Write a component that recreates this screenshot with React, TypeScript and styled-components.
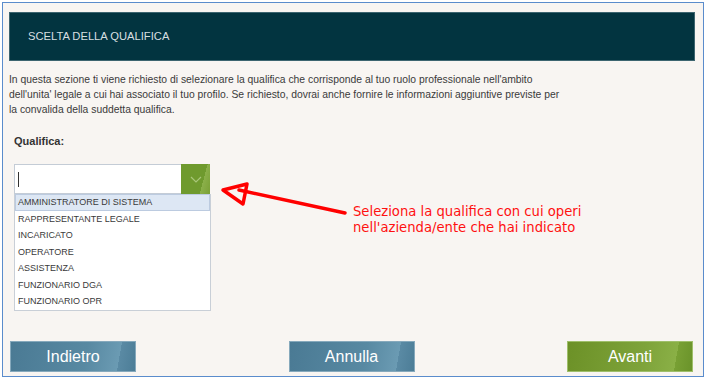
import React from "react";
import styled, { createGlobalStyle } from "styled-components";

const Global = createGlobalStyle`
  html, body { margin: 0; padding: 0; background: #ffffff; }
  body { font-family: "Liberation Sans", Arial, sans-serif; }
`;

const Frame = styled.div`
  position: relative;
  box-sizing: border-box;
  margin: 2px 0 0 2px;
  width: 702px;
  height: 375px;
  border: 1px solid #5a8ccc;
  background: #f8f5f2;
  padding: 9px 8px 4px 6px;
  display: flex;
  flex-direction: column;
`;

const Header = styled.div`
  box-sizing: border-box;
  height: 49px;
  background: #023440;
  border: 1px solid #3d6570;
  display: flex;
  align-items: center;
  padding: 0 0 2px 18px;
  color: #d6dfe0;
  font-size: 11.2px;
`;

const Intro = styled.p`
  margin: 11px 0 0 0;
  font-size: 10.35px;
  line-height: 15px;
  color: #3a3a3a;
  white-space: nowrap;
`;

const Label = styled.div`
  margin: 18px 0 0 5px;
  font-size: 11px;
  font-weight: bold;
  color: #333;
`;

const SelectWrap = styled.div`
  position: relative;
  margin: 17px 0 0 5px;
  width: 196px;
`;

const Select = styled.div`
  box-sizing: border-box;
  height: 30px;
  display: flex;
  border: 1px solid #c4ccd6;
  background: #fff;
`;

const Caret = styled.div`
  flex: 1;
  display: flex;
  align-items: center;
  padding-left: 3px;
  &::before {
    content: "";
    width: 1px;
    height: 15px;
    background: #333;
  }
`;

const DropBtn = styled.div`
  width: 29px;
  margin: -1px -1px -1px 0;
  display: flex;
  align-items: center;
  justify-content: center;
  background: linear-gradient(105deg, #6f9a2e 0%, #6f9a2e 72%, #8bb04a 72%, #7aa036 100%);
  svg { display: block; }
`;

const List = styled.ul`
  position: absolute;
  left: 0;
  top: 30px;
  width: 197px;
  box-sizing: border-box;
  margin: 0;
  padding: 0;
  list-style: none;
  background: #fff;
  border: 1px solid #c9cfd7;
  border-top: none;
  z-index: 2;
`;

const Item = styled.li<{ $active?: boolean }>`
  box-sizing: border-box;
  height: 16.5px;
  display: flex;
  align-items: center;
  padding-left: 2px;
  font-size: 9px;
  color: #3a3a3a;
  background: ${(p) => (p.$active ? "#dde7f4" : "transparent")};
  border: 1px solid ${(p) => (p.$active ? "#bccbe0" : "transparent")};
`;

const Buttons = styled.div`
  margin-top: auto;
  display: flex;
  justify-content: space-between;
  padding: 0 2px 0 1px;
`;

const Btn = styled.div<{ $green?: boolean }>`
  position: relative;
  box-sizing: border-box;
  width: 126px;
  height: 31px;
  display: flex;
  align-items: center;
  justify-content: center;
  color: #ffffff;
  font-size: 16px;
  background: ${(p) =>
    p.$green
      ? "linear-gradient(100deg, #6c9127 0%, #7ea33a 60%, #8ab046 86%, #78a034 86%, #6a932a 100%)"
      : "linear-gradient(100deg, #4a7a94 0%, #5889a2 60%, #6b9bb3 86%, #5a8aa4 86%, #4c7d97 100%)"};
  border: 1px solid ${(p) => (p.$green ? "#9fbf6a" : "#86a9bc")};
`;

const Note = styled.div`
  position: absolute;
  left: 350px;
  top: 201px;
  color: #ff1010;
  font-family: "DejaVu Sans", Verdana, sans-serif;
  font-size: 13.2px;
  line-height: 16px;
  z-index: 3;
`;

const ArrowSvg = styled.svg`
  position: absolute;
  left: 0;
  top: 0;
  pointer-events: none;
  z-index: 3;
`;

const items = [
  "AMMINISTRATORE DI SISTEMA",
  "RAPPRESENTANTE LEGALE",
  "INCARICATO",
  "OPERATORE",
  "ASSISTENZA",
  "FUNZIONARIO DGA",
  "FUNZIONARIO OPR",
];

export default function App() {
  return (
    <>
      <Global />
      <Frame>
        <Header>SCELTA DELLA QUALIFICA</Header>
        <Intro>
          In questa sezione ti viene richiesto di selezionare la qualifica che corrisponde al tuo ruolo professionale nell'ambito
          <br />
          dell'unita' legale a cui hai associato il tuo profilo. Se richiesto, dovrai anche fornire le informazioni aggiuntive previste per
          <br />
          la convalida della suddetta qualifica.
        </Intro>
        <Label>Qualifica:</Label>
        <SelectWrap>
          <Select>
            <Caret />
            <DropBtn>
              <svg width="12" height="7" viewBox="0 0 12 7">
                <path d="M1 1 L6 6 L11 1" fill="none" stroke="#a9c67a" strokeWidth="1.2" />
              </svg>
            </DropBtn>
          </Select>
          <List>
            {items.map((t, i) => (
              <Item key={t} $active={i === 0}>
                {t}
              </Item>
            ))}
          </List>
        </SelectWrap>
        <Buttons>
          <Btn>Indietro</Btn>
          <Btn>Annulla</Btn>
          <Btn $green>Avanti</Btn>
        </Buttons>
        <ArrowSvg width="700" height="373" viewBox="0 0 700 373">
          <line x1="342" y1="210" x2="236" y2="187" stroke="#ff0000" strokeWidth="3.5" strokeLinecap="round" />
          <polygon points="220,187 244,181 240,201" fill="none" stroke="#ff0000" strokeWidth="3.5" strokeLinejoin="round" />
        </ArrowSvg>
        <Note>
          Seleziona la qualifica con cui operi
          <br />
          nell'azienda/ente che hai indicato
        </Note>
      </Frame>
    </>
  );
}
